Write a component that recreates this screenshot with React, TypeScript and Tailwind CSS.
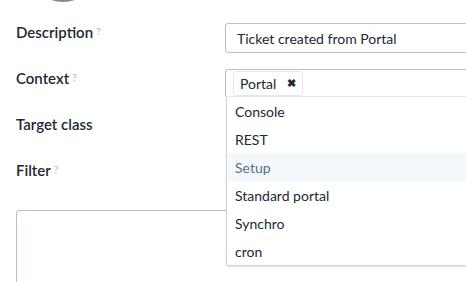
import React from "react";

const font = { fontFamily: "Lato, 'Open Sans', sans-serif" };

function Help() {
  return <sup className="ml-[3px] text-[10px] text-[#a4b4c6] font-normal relative top-[-3px]">?</sup>;
}

export default function App() {
  const items = ["Console", "REST", "Setup", "Standard portal", "Synchro", "cron"];
  return (
    <div className="w-[466px] h-[282px] overflow-hidden bg-white relative" style={font}>
      <div className="h-[2px] overflow-hidden ml-[27px]">
        <div className="w-[72px] h-[72px] rounded-full bg-[#7d8b97] mt-[-70px]" />
      </div>
      <div className="flex flex-col pt-[21px]">
        <div className="flex h-[30px]">
          <div className="w-[225px] pl-[16px] text-[15px] font-semibold text-[#212934] leading-[18px]">
            Description<Help />
          </div>
          <div className="flex-1 border border-[#b4c0cf] rounded-[3px] mr-[-4px] flex items-center pl-[11px] text-[14px] text-[#212934]">
            Ticket created from Portal
          </div>
        </div>
        <div className="flex h-[28px] mt-[16px]">
          <div className="w-[225px] pl-[16px] text-[15px] font-semibold text-[#212934] leading-[18px]">
            Context<Help />
          </div>
          <div className="flex-1 relative">
            <div className="h-[28px] border border-[#b4c0cf] border-b-[#e6eaee] rounded-t-[3px] mr-[-4px] flex items-start pl-[7px] pt-[1px]">
              <div className="h-[25px] flex items-center border border-[#e4e8ec] rounded-[3px] px-[6px] text-[14px] text-[#212934] gap-[11px]">
                <span>Portal</span>
                <span className="text-[11px] font-bold">✖</span>
              </div>
            </div>
            <div className="absolute left-[1px] right-[-4px] top-[28px] bg-white border border-[#d0d5da] border-t-0 rounded-b-[3px] shadow-[0_1px_2px_rgba(0,0,0,0.12)] z-10">
              {items.map((it) => (
                <div
                  key={it}
                  className={
                    "h-[28px] flex items-center pl-[8px] text-[14px] " +
                    (it === "Setup" ? "bg-[#f3f8fc] text-[#5e6e82]" : "text-[#212934]")
                  }
                >
                  {it}
                </div>
              ))}
            </div>
          </div>
        </div>
        <div className="h-[46px] pl-[16px] pt-[18px] text-[15px] font-semibold text-[#212934] leading-[18px]">
          Target class
        </div>
        <div className="h-[67px] pl-[16px] pt-[18px] text-[15px] font-semibold text-[#212934] leading-[18px]">
          Filter<Help />
        </div>
        <div className="ml-[16px] h-[90px] border border-[#b4c0cf] rounded-[3px] mr-[-4px]" />
      </div>
    </div>
  );
}
